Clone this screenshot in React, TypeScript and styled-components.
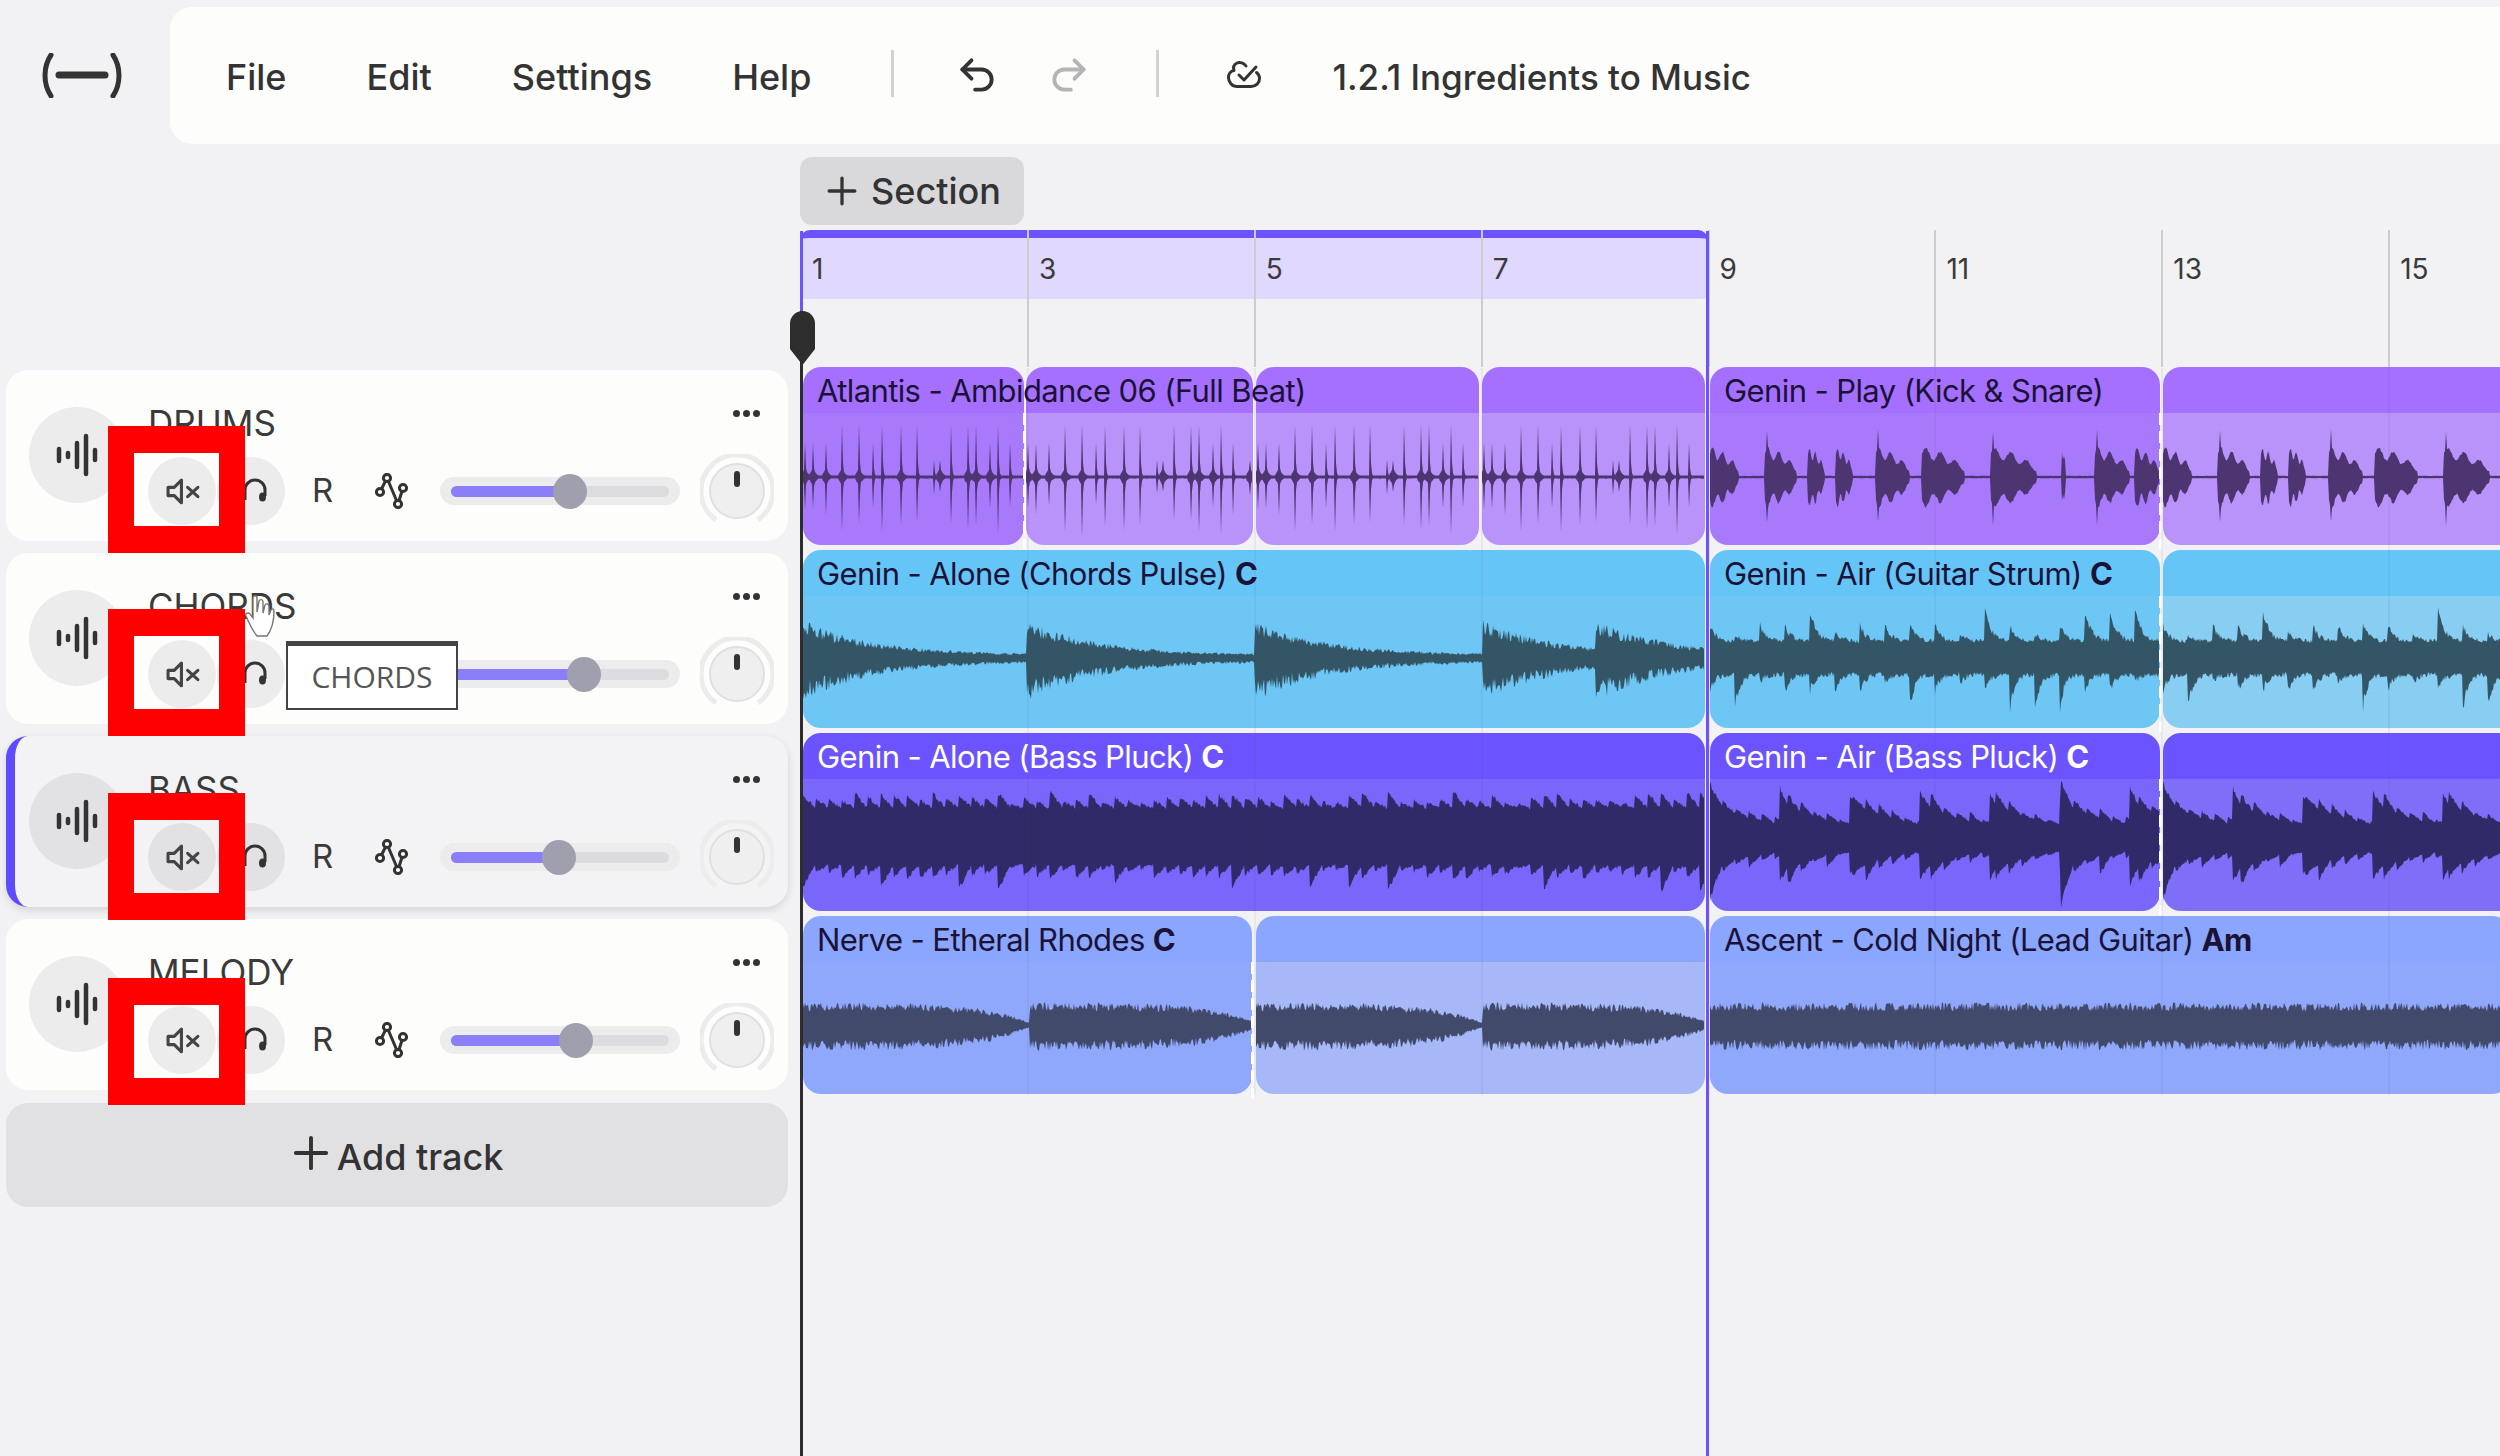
import {useMemo} from 'react'
import styled, {createGlobalStyle} from 'styled-components'
import {Plus, Undo2, Redo2} from 'lucide-react'

const GlobalStyle = createGlobalStyle`
  html, body {
    margin: 0;
    background: #f2f2f4;
    overflow: hidden;
  }
  * {
    box-sizing: border-box;
  }
`

const Page = styled.div`
  width: 2500px;
  height: 1456px;
  overflow: hidden;
  position: relative;
  font-family: Inter, 'Liberation Sans', sans-serif;
  color: #333;
`

/* header */
const Header = styled.header`
  display: flex;
  height: 144px;
  padding-top: 7px;
`
const LogoSlot = styled.div`
  width: 170px;
  padding: 46px 0 0 42px;
`
const Toolbar = styled.div`
  flex: 1;
  display: flex;
  align-items: center;
  padding: 0 0 0 56px;
  background: #fdfdfb;
  border-radius: 22px 0 0 22px;
`
const MenuItem = styled.div`
  font-size: 36px;
  font-weight: 500;
  margin: 3px 80px 0 0;
`
const Divider = styled.div`
  width: 3px;
  height: 47px;
  background: #d2d2d2;
  margin-top: -4px;
`
const ToolIcons = styled.div`
  display: flex;
  align-items: center;
  gap: 48px;
  margin: -2px 65px 0 61px;
`
const SaveIcon = styled.svg`
  width: 34px;
  height: 28px;
  margin: -4px 71px 0 68px;
`
const ProjectTitle = styled.div`
  font-size: 35px;
  font-weight: 500;
  margin-top: 3px;
`

/* layout */
const Workspace = styled.div`
  display: flex;
`
const TrackPanel = styled.div`
  flex: none;
  width: 794px;
  padding: 226px 0 0 6px;
  display: flex;
  flex-direction: column;
  gap: 12px;
`

/* tracks */
const TrackCard = styled.div<{$active?: boolean}>`
  position: relative;
  width: 782px;
  height: 171px;
  display: flex;
  align-items: flex-start;
  padding-left: ${p => (p.$active ? 14 : 23)}px;
  background: ${p => (p.$active ? '#f3f3f6' : '#fdfdfb')};
  border-radius: 22px;
  border-left: ${p => (p.$active ? '9px solid #5d4cff' : 'none')};
  box-shadow: ${p => (p.$active ? '0 3px 8px rgba(0,0,0,.13)' : 'none')};
`
const TrackAvatar = styled.div<{$active?: boolean}>`
  flex: none;
  width: 96px;
  height: 96px;
  margin-top: 37px;
  border-radius: 50%;
  background: ${p => (p.$active ? '#e2e2e4' : '#ececec')};
  display: flex;
  align-items: center;
  justify-content: center;
`
const TrackMain = styled.div`
  margin-left: 23px;
  padding-top: 33px;
`
const TrackHead = styled.div`
  width: 612px;
  height: 40px;
  display: flex;
  justify-content: space-between;
  margin-bottom: 14px;
`
const TrackName = styled.div`
  font-size: 35px;
  line-height: 40px;
  color: #3a3a3a;
`
const MoreDots = styled.div`
  display: flex;
  gap: 3px;
  margin-top: 7px;
  span {
    width: 7px;
    height: 7px;
    border-radius: 50%;
    background: #333;
  }
`
const Controls = styled.div`
  display: flex;
  align-items: center;
  height: 68px;
`
const RoundButton = styled.div<{$active?: boolean}>`
  width: 68px;
  height: 68px;
  margin-right: 1px;
  border-radius: 50%;
  background: ${p => (p.$active ? '#e2e2e4' : '#ececec')};
  display: flex;
  align-items: center;
  justify-content: center;
`
const RecordLabel = styled.div`
  width: 22px;
  margin: -2px 0 0 26px;
  font-size: 33px;
  color: #3a3a3a;
`
const AutomationIcon = styled.svg`
  width: 34px;
  height: 36px;
  margin-left: 41px;
`
const SliderTrack = styled.div`
  position: relative;
  width: 240px;
  height: 28px;
  margin-left: 31px;
  padding: 8.5px 11px;
  background: #ececec;
  border-radius: 14px;
`
const SliderRail = styled.div`
  height: 11px;
  background: #dcdce0;
  border-radius: 6px;
`
const SliderFill = styled.div`
  position: relative;
  height: 11px;
  background: #8a7ef9;
  border-radius: 6px 0 0 6px;
`
const SliderThumb = styled.div`
  position: absolute;
  right: -17px;
  top: -12px;
  width: 34px;
  height: 35px;
  border-radius: 50%;
  background: #a09fae;
`
const KnobIcon = styled.svg`
  width: 74px;
  height: 74px;
  margin-left: 20px;
`
const Frame = styled.div<{$top: number; $active?: boolean}>`
  position: absolute;
  z-index: 3;
  left: ${p => (p.$active ? 93 : 102)}px;
  top: ${p => p.$top}px;
  width: 137px;
  height: 127px;
  border: solid #ff0000;
  border-width: 27px 26px;
`
const Tooltip = styled.div`
  position: absolute;
  z-index: 2;
  left: 280px;
  top: 88px;
  width: 172px;
  height: 69px;
  padding-bottom: 2px;
  background: #fff;
  border: 2px solid #444;
  border-top-width: 5px;
  display: flex;
  align-items: center;
  justify-content: center;
  font-family: 'Open Sans', sans-serif;
  font-size: 30px;
  color: #555;
`
const HandCursor = styled.svg`
  position: absolute;
  z-index: 2;
  left: 239px;
  top: 42px;
  width: 30px;
  height: 42px;
`
const AddTrack = styled.div`
  width: 782px;
  height: 104px;
  display: flex;
  align-items: center;
  justify-content: center;
  background: #e1e1e3;
  border-radius: 22px;
  font-size: 36px;
  font-weight: 500;
  margin-top: 1px;
  padding: 4px 6px 0 0;
  svg {
    margin-top: -8px;
  }
`

/* timeline */
const Timeline = styled.div`
  position: relative;
  flex: 1;
  min-width: 0;
  padding-top: 13px;
  margin-left: 6px;
`
const SectionButton = styled.div`
  width: 224px;
  height: 68px;
  display: flex;
  align-items: center;
  padding-left: 20px;
  gap: 7px;
  background: #d9d9db;
  border-radius: 12px;
  font-size: 36px;
  font-weight: 500;
`
const Ruler = styled.div`
  position: relative;
  margin-top: 5px;
  height: 137px;
  display: grid;
  grid-template-columns: repeat(8, 226.9px);
`
const LoopRegion = styled.div`
  position: absolute;
  left: 0;
  top: 0;
  width: 908px;
  height: 69px;
  background: #e0d8ff;
  border-top: 8px solid #6b54ff;
  border-radius: 10px 10px 6px 6px;
`
const BarCell = styled.div<{$first?: boolean}>`
  position: relative;
  border-left: 2px solid ${p => (p.$first ? 'transparent' : '#cdcdd0')};
  padding: 22px 0 0 10px;
  font-size: 28px;
  line-height: 34px;
  color: #3a3a3a;
`
const ClipRows = styled.div`
  display: flex;
  flex-direction: column;
  gap: 5px;
`
const ClipRow = styled.div`
  display: flex;
  height: 178px;
  padding-left: 3px;
`
const Segment = styled.div<{$w: number; $gap: number; $labelled?: boolean}>`
  position: relative;
  flex: none;
  width: ${p => p.$w}px;
  margin-left: ${p => p.$gap}px;
  border-radius: 18px;
  display: flex;
  flex-direction: column;
  z-index: ${p => (p.$labelled ? 1 : 0)};
`
const ClipHead = styled.div<{$bg: string; $light?: boolean}>`
  height: 46px;
  padding-left: 14px;
  background: ${p => p.$bg};
  border-radius: 18px 18px 0 0;
  font-size: 31px;
  letter-spacing: -0.6px;
  line-height: 48px;
  white-space: nowrap;
  color: ${p => (p.$light ? '#fff' : '#1b1238')};
  b {
    font-weight: 700;
  }
`
const ClipBody = styled.div<{$bg: string}>`
  flex: 1;
  background: ${p => p.$bg};
  border-radius: 0 0 18px 18px;
`
const WaveSvg = styled.svg`
  display: block;
  overflow: visible;
`
const DashMark = styled.div`
  position: absolute;
  right: -2px;
  top: 46px;
  bottom: -4px;
  width: 3px;
  background: repeating-linear-gradient(#fff 0 12px, transparent 12px 18px);
`
const BeatLines = styled.div`
  position: absolute;
  left: 0;
  top: 224px;
  height: 727px;
  width: 100%;
  display: grid;
  grid-template-columns: repeat(8, 226.9px);
  pointer-events: none;
  z-index: 1;
  div {
    border-left: 2px solid rgba(60, 60, 80, 0.06);
  }
`
const LoopEnd = styled.div`
  position: absolute;
  z-index: 2;
  left: 906px;
  top: 87px;
  bottom: -400px;
  width: 3px;
  background: #6b54ff;
`
const PlayheadLine = styled.div`
  position: absolute;
  z-index: 2;
  left: 0;
  top: 87px;
  bottom: -400px;
  width: 3px;
  background: linear-gradient(#6b54ff 0 80px, #2d2d2d 80px);
`
const PlayheadGrip = styled.svg`
  position: absolute;
  z-index: 2;
  left: -10px;
  top: 167px;
  width: 25px;
  height: 54px;
`

function rng(seed: number) {
  let s = seed
  return () => {
    s = (s * 16807) % 2147483647
    return (s % 10000) / 10000
  }
}

type Amp = [number, number][]

function spikes(w: number, seed: number): Amp {
  const r = rng(seed)
  const top = new Array(w).fill(1.5)
  let x = 2
  while (x < w) {
    const roll = r()
    const a = roll > 0.5 ? 52 : roll > 0.25 ? 34 : 17
    for (let i = 0; i < 4 && x + i < w; i++) top[x + i] = Math.max(top[x + i], a * Math.exp(-i * 1.3))
    if (r() > 0.6) {
      for (let i = -3; i < 6; i++) {
        if (x + i >= 0 && x + i < w) top[x + i] = Math.max(top[x + i], 10 * Math.exp(-Math.abs(i) / 3))
      }
    }
    x += 6 + Math.floor(r() * 14)
  }
  return top.map(a => [a, a * (0.8 + r() * 0.35)])
}

const KICKS = [[0, 29], [55, 87], [98, 115], [126, 143], [166, 200], [212, 255], [281, 327], [352, 356], [385, 420], [425, 450]]

function kicks(w: number, seed: number): Amp {
  const r = rng(seed)
  const top = new Array(w).fill(1.2)
  const tall = [55, 166, 281, 385]
  for (const [s, e] of KICKS) {
    for (let x = s; x < e && x < w; x++) {
      const t = (x - s) / (e - s)
      const lobe = 0.8 + 0.2 * Math.sin(t * 18)
      top[x] = 30 * lobe * (1 - t * t * 0.7)
    }
    if (tall.includes(s)) top[s + 2] = 48
  }
  return top.map(a => [a * (0.92 + r() * 0.1), a * (0.92 + r() * 0.14)])
}

function decays(w: number, seed: number, onsets: number[]): Amp {
  const r = rng(seed)
  const out: Amp = []
  for (let x = 0; x < w; x++) {
    let on = 0
    for (const o of onsets) if (o <= x) on = o
    const a = 3 + 33 * Math.exp(-(x - on) / 72)
    out.push([a * (0.62 + r() * 0.45), a * (0.62 + r() * 0.62)])
  }
  return out
}

function strum(w: number, seed: number): Amp {
  const r = rng(seed)
  const bumps: number[] = []
  for (let i = 0; i < w / 25 + 1; i++) {
    const roll = r()
    bumps.push(roll > 0.85 ? 32 : roll > 0.4 ? 16 : 8)
  }
  const out: Amp = []
  for (let x = 0; x < w; x++) {
    const i = Math.floor(x / 25)
    const t = (x % 25) / 25
    const a = 17 + bumps[i] * Math.exp(-t * 4)
    const b = 17 + bumps[(i + 3) % bumps.length] * Math.exp(-t * 5)
    out.push([a * (0.86 + r() * 0.24), b * (0.82 + r() * 0.3)])
  }
  return out
}

function dense(w: number, seed: number, pulse: number): Amp {
  const r = rng(seed)
  const out: Amp = []
  let tooth = 10
  for (let x = 0; x < w; x++) {
    if (x % 13 === 0) tooth = 4 + r() * 13
    const t = (x % 13) / 13
    const env = pulse ? 0.28 + 1.0 * Math.exp(-(x % pulse) / (pulse * 0.6)) : 1
    const a = (31 + tooth * (1 - t)) * env
    const b = (26 + tooth * 1.3 * (1 - t) * (x % 39 < 13 ? 1.3 : 0.7)) * env
    out.push([a * (0.94 + r() * 0.1), b * (0.92 + r() * 0.12)])
  }
  return out
}

function swells(w: number, seed: number, period: number): Amp {
  const r = rng(seed)
  const out: Amp = []
  for (let x = 0; x < w; x++) {
    const t = (x % period) / period
    const a = 2 + 19 * (1 - Math.pow(t, 5))
    out.push([a * (0.66 + r() * 0.42), a * (0.7 + r() * 0.52)])
  }
  return out
}

function Wave({amp, w, cy, color}: {amp: Amp; w: number; cy: number; color: string}) {
  const d = useMemo(() => {
    const top = amp.map(([a], x) => `${x} ${(cy - a).toFixed(1)}`)
    const bottom = amp.map(([, b], x) => `${x} ${(cy + b).toFixed(1)}`).reverse()
    return `M${top.join('L')}L${bottom.join('L')}Z`
  }, [amp, cy])
  return (
    <WaveSvg width={w} height={132} viewBox={`0 0 ${w} 132`}>
      <path d={d} fill={color} />
    </WaveSvg>
  )
}

const rows = [
  {
    head: '#a570ff',
    color: '#4c3570',
    cy: 64,
    segments: [
      {w: 221, gap: 0, body: '#a87afb', dash: true, label: <>Atlantis - Ambidance 06 (Full Beat)</>, amp: spikes(221, 71)},
      {w: 227, gap: 2, body: '#b993f9', amp: spikes(227, 71)},
      {w: 223, gap: 3, body: '#b993f9', amp: spikes(223, 71)},
      {w: 223, gap: 3, body: '#b993f9', amp: spikes(223, 71)},
      {w: 450, gap: 5, body: '#a87afb', dash: true, label: <>Genin - Play (Kick &amp; Snare)</>, amp: kicks(450, 9)},
      {w: 400, gap: 3, body: '#b993f9', amp: kicks(400, 9)},
    ],
  },
  {
    head: '#66c5f7',
    color: '#335566',
    cy: 62,
    segments: [
      {w: 902, gap: 0, body: '#6ec6f4', label: <>Genin - Alone (Chords Pulse) <b>C</b></>, amp: decays(902, 33, [0, 224, 452, 680, 793])},
      {w: 450, gap: 5, body: '#6ec6f4', dash: true, label: <>Genin - Air (Guitar Strum) <b>C</b></>, amp: strum(450, 17)},
      {w: 400, gap: 3, body: '#88cdf2', amp: strum(400, 17)},
    ],
  },
  {
    head: '#6b54ff',
    color: '#312a68',
    cy: 60,
    light: true,
    segments: [
      {w: 902, gap: 0, body: '#7966fb', label: <>Genin - Alone (Bass Pluck) <b>C</b></>, amp: dense(902, 51, 0)},
      {w: 450, gap: 5, body: '#7966fb', dash: true, label: <>Genin - Air (Bass Pluck) <b>C</b></>, amp: dense(450, 23, 70)},
      {w: 400, gap: 3, body: '#7f6ef8', amp: dense(400, 23, 70)},
    ],
  },
  {
    head: '#8aa6ff',
    color: '#414a6a',
    cy: 63,
    segments: [
      {w: 449, gap: 0, body: '#8fa8fb', dash: true, label: <>Nerve - Etheral Rhodes <b>C</b></>, amp: swells(449, 41, 227)},
      {w: 449, gap: 4, body: '#a6b8f8', amp: swells(449, 41, 227)},
      {w: 800, gap: 5, body: '#8fa8fb', label: <>Ascent - Cold Night (Lead Guitar) <b>Am</b></>, amp: swells(800, 67, 1600)},
    ],
  },
]

const tracks = [
  {name: 'DRUMS', level: 119, frame: 56},
  {name: 'CHORDS', level: 133, frame: 56, hover: true},
  {name: 'BASS', level: 108, frame: 57, active: true},
  {name: 'MELODY', level: 125, frame: 59},
]

const bars = [1, 3, 5, 7, 9, 11, 13, 15]

function Logo() {
  return (
    <svg width="80" height="45" viewBox="0 0 80 45" fill="none" stroke="#333" strokeLinecap="round">
      <path d="M9 2C1 14 1 31 9 43M71 2C79 14 79 31 71 43" strokeWidth="5" />
      <path d="M17 22H63" strokeWidth="7" />
    </svg>
  )
}

function WaveIcon() {
  return (
    <svg width="44" height="44" viewBox="0 0 44 44" stroke="#333" strokeWidth="4.5" strokeLinecap="round">
      <path d="M4 16V28M13 20V24M22 10V34M31 3V41M40 17V27" />
    </svg>
  )
}

function MuteIcon() {
  return (
    <svg width="35" height="27" viewBox="0 0 34 26" fill="none" stroke="#444" strokeWidth="3" strokeLinejoin="round" style={{marginLeft: 3}}>
      <path d="M2 9H8L15 2V24L8 17H2Z" />
      <path d="M21 9L31 18M31 9L21 18" strokeLinecap="round" />
    </svg>
  )
}

function HeadphonesIcon() {
  return (
    <svg width="24" height="26" viewBox="0 0 24 26" fill="none" stroke="#333" strokeWidth="3" style={{marginLeft: 8}}>
      <path d="M2 22V12A10 10 0 0 1 22 12V18" />
      <ellipse cx="19.5" cy="19" rx="3.5" ry="4.5" fill="#333" stroke="none" />
    </svg>
  )
}

function TrackRow({name, level, frame, active, hover}: (typeof tracks)[number] & {active?: boolean; hover?: boolean}) {
  return (
    <TrackCard $active={active}>
      <TrackAvatar $active={active}>
        <WaveIcon />
      </TrackAvatar>
      <TrackMain>
        <TrackHead>
          <TrackName>{name}</TrackName>
          <MoreDots>
            <span />
            <span />
            <span />
          </MoreDots>
        </TrackHead>
        <Controls>
          <RoundButton $active={active}>
            <MuteIcon />
          </RoundButton>
          <RoundButton $active={active}>
            <HeadphonesIcon />
          </RoundButton>
          <RecordLabel>R</RecordLabel>
          <AutomationIcon viewBox="0 0 34 36" fill="none" stroke="#333" strokeWidth="3">
            <path d="M5 19L12 5M12 5L23 31M23 31L28 15" />
            <circle cx="12" cy="5" r="3.6" fill="#fdfdfb" />
            <circle cx="5" cy="19" r="3.6" fill="#fdfdfb" />
            <circle cx="28" cy="15" r="3.6" fill="#fdfdfb" />
            <circle cx="23" cy="31" r="3.6" fill="#fdfdfb" />
          </AutomationIcon>
          <SliderTrack>
            <SliderRail>
              <SliderFill style={{width: level}}>
                <SliderThumb />
              </SliderFill>
            </SliderRail>
          </SliderTrack>
          <KnobIcon viewBox="0 0 74 74" fill="none">
            <path d="M16 66A36 36 0 1 1 58 66" stroke="#ececec" strokeWidth="5" />
            <circle cx="37" cy="37" r="27" fill="#efefef" stroke="#e0e0e0" strokeWidth="2" />
            <path d="M37 20V30" stroke="#333" strokeWidth="6" strokeLinecap="round" />
          </KnobIcon>
        </Controls>
      </TrackMain>
      <Frame $top={frame} $active={active} />
      {hover && (
        <>
          <HandCursor viewBox="0 0 30 42" fill="#fff" stroke="#777" strokeWidth="1.4">
            <path d="M8 3C8 0 12 0 12 3V17L14 6C15 4 18 4 18 7L18 18L20 10C21 8 24 9 24 11L24 20L26 15C27 13 29 14 29 16C29 24 28 33 22 41H12C8 36 4 28 1 21C0 18 3 17 5 19L8 23Z" />
          </HandCursor>
          <Tooltip>CHORDS</Tooltip>
        </>
      )}
    </TrackCard>
  )
}

export default function App() {
  return (
    <Page>
      <GlobalStyle />
      <Header>
        <LogoSlot>
          <Logo />
        </LogoSlot>
        <Toolbar>
          <MenuItem>File</MenuItem>
          <MenuItem>Edit</MenuItem>
          <MenuItem>Settings</MenuItem>
          <MenuItem>Help</MenuItem>
          <Divider />
          <ToolIcons>
            <Undo2 size={44} color="#333" strokeWidth={2.1} />
            <Redo2 size={44} color="#b4b4b4" strokeWidth={2.1} />
          </ToolIcons>
          <Divider />
          <SaveIcon viewBox="0 0 34 28" fill="none" stroke="#333" strokeWidth="3" strokeLinecap="round" strokeLinejoin="round">
            <path d="M19 6C17 3 13 1.5 10 3C7 4.5 6 7.5 7 10.5C3.5 11 1.5 14 1.5 17.5C1.5 22 5 26.5 10 26.5H24C29 26.5 32.5 23 32.5 18.5C32.5 16 31.5 14 29.5 12.5" />
            <path d="M12 15L17 20L29 7" />
          </SaveIcon>
          <ProjectTitle>1.2.1 Ingredients to Music</ProjectTitle>
        </Toolbar>
      </Header>
      <Workspace>
        <TrackPanel>
          {tracks.map(t => (
            <TrackRow key={t.name} {...t} />
          ))}
          <AddTrack>
            <Plus size={52} strokeWidth={1.8} />
            Add track
          </AddTrack>
        </TrackPanel>
        <Timeline>
          <SectionButton>
            <Plus size={44} strokeWidth={1.8} />
            Section
          </SectionButton>
          <Ruler>
            <LoopRegion />
            {bars.map((b, i) => (
              <BarCell key={b} $first={i === 0}>
                {b}
              </BarCell>
            ))}
          </Ruler>
          <ClipRows>
            {rows.map((row, ri) => (
              <ClipRow key={ri}>
                {row.segments.map((s, si) => (
                  <Segment key={si} $w={s.w} $gap={s.gap} $labelled={!!s.label}>
                    <ClipHead $bg={row.head} $light={row.light}>
                      {s.label}
                    </ClipHead>
                    <ClipBody $bg={s.body}>
                      <Wave amp={s.amp} w={s.w} cy={row.cy} color={row.color} />
                    </ClipBody>
                    {s.dash && <DashMark />}
                  </Segment>
                ))}
              </ClipRow>
            ))}
          </ClipRows>
          <BeatLines>
            {bars.map(b => (
              <div key={b} />
            ))}
          </BeatLines>
          <LoopEnd />
          <PlayheadLine />
          <PlayheadGrip viewBox="0 0 25 54">
            <path d="M0 12.5A12.5 12.5 0 0 1 25 12.5V38L12.5 54L0 38Z" fill="#2d2d2d" />
          </PlayheadGrip>
        </Timeline>
      </Workspace>
    </Page>
  )
}
